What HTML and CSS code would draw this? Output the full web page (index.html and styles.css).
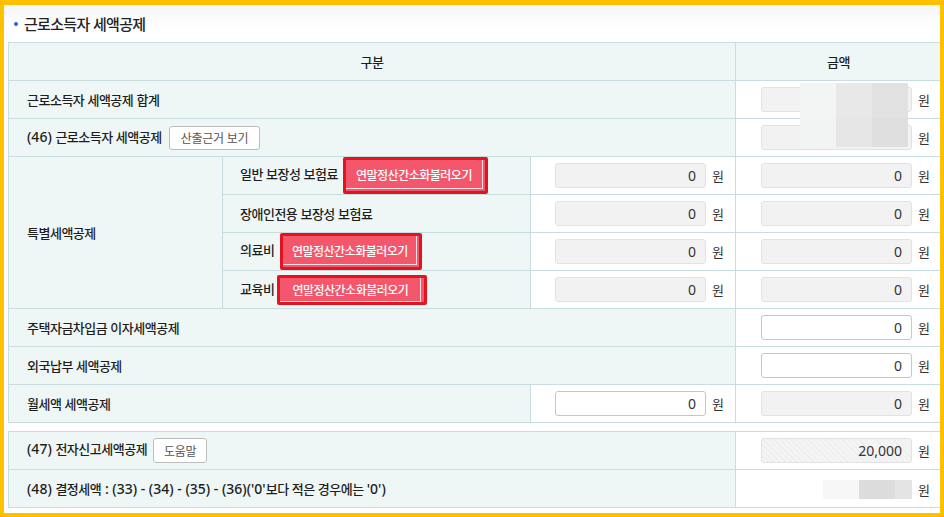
FILE: index.html
```html
<!DOCTYPE html>
<html lang="ko">
<head>
<meta charset="utf-8">
<title>근로소득자 세액공제</title>
<link rel="stylesheet" href="styles.css">
</head>
<body>
<div class="panel">
  <h2 class="title"><span class="dot"></span>근로소득자 세액공제</h2>
  <table class="grid">
    <colgroup><col class="c1"><col class="c2"><col class="c3"><col class="c4"></colgroup>
    <tr class="head">
      <th colspan="3">구분</th>
      <th>금액</th>
    </tr>
    <tr>
      <td class="lbl" colspan="3">근로소득자 세액공제 합계</td>
      <td class="val">
        <span class="inwrap">
          <input class="num dis" type="text" value="" disabled>
          <span class="mosaic m1"><i class="a"></i><i class="b"></i><i class="c"></i><i class="d"></i><i class="e"></i><i class="f"></i></span>
        </span><span class="won">원</span>
      </td>
    </tr>
    <tr>
      <td class="lbl" colspan="3"><span class="lat">(46) </span>근로소득자 세액공제<button class="btn gray">산출근거 보기</button></td>
      <td class="val"><input class="num dis" type="text" value="" disabled><span class="won">원</span></td>
    </tr>
    <tr>
      <td class="lbl" rowspan="4">특별세액공제</td>
      <td class="lbl sub">일반 보장성 보험료<span class="hl hl-a"><span class="pink">연말정산간소화불러오기</span></span></td>
      <td class="val"><input class="num dis" type="text" value="0" disabled><span class="won">원</span></td>
      <td class="val"><input class="num dis" type="text" value="0" disabled><span class="won">원</span></td>
    </tr>
    <tr>
      <td class="lbl sub">장애인전용 보장성 보험료</td>
      <td class="val"><input class="num dis" type="text" value="0" disabled><span class="won">원</span></td>
      <td class="val"><input class="num dis" type="text" value="0" disabled><span class="won">원</span></td>
    </tr>
    <tr>
      <td class="lbl sub">의료비<span class="hl hl-b"><span class="pink">연말정산간소화불러오기</span></span></td>
      <td class="val"><input class="num dis" type="text" value="0" disabled><span class="won">원</span></td>
      <td class="val"><input class="num dis" type="text" value="0" disabled><span class="won">원</span></td>
    </tr>
    <tr>
      <td class="lbl sub">교육비<span class="hl hl-c"><span class="pink">연말정산간소화불러오기</span></span></td>
      <td class="val"><input class="num dis" type="text" value="0" disabled><span class="won">원</span></td>
      <td class="val"><input class="num dis" type="text" value="0" disabled><span class="won">원</span></td>
    </tr>
    <tr>
      <td class="lbl" colspan="3">주택자금차입금 이자세액공제</td>
      <td class="val"><input class="num" type="text" value="0"><span class="won">원</span></td>
    </tr>
    <tr>
      <td class="lbl" colspan="3">외국납부 세액공제</td>
      <td class="val"><input class="num" type="text" value="0"><span class="won">원</span></td>
    </tr>
    <tr>
      <td class="lbl" colspan="2">월세액 세액공제</td>
      <td class="val"><input class="num" type="text" value="0"><span class="won">원</span></td>
      <td class="val"><input class="num dis" type="text" value="0" disabled><span class="won">원</span></td>
    </tr>
  </table>

  <table class="grid second">
    <colgroup><col class="c1"><col class="c2"><col class="c3"><col class="c4"></colgroup>
    <tr>
      <td class="lbl" colspan="3"><span class="lat">(47) </span>전자신고세액공제<button class="btn gray help">도움말</button></td>
      <td class="val"><input class="num dis hatch" type="text" value="20,000" disabled><span class="won">원</span></td>
    </tr>
    <tr>
      <td class="lbl" colspan="3"><span class="lat">(48) </span>결정세액<span class="lat"> : (33) - (34) - (35) - (36)('0'</span>보다 적은 경우에는 <span class="lat">'0')</span></td>
      <td class="val"><span class="mosaic2"><i class="a"></i><i class="b"></i><i class="c"></i></span><span class="won">원</span></td>
    </tr>
  </table>
</div>
</body>
</html>
```

FILE: styles.css
```css
* { box-sizing: border-box; }
html, body { margin: 0; padding: 0; }
body {
  background: #ffc000;
  width: 944px;
  height: 517px;
  overflow: hidden;
  font-family: "Noto Sans", "Noto Sans CJK KR", sans-serif;
  color: #333;
}
.panel {
  margin: 5px 4px 4px 4px;
  width: 936px;
  height: 508px;
  background: linear-gradient(#f6f6f6 0, #ffffff 24px);
  overflow: hidden;
}
.title {
  margin: 0;
  height: 37px;
  display: flex;
  align-items: center;
  padding-left: 10px;
  font-size: 15px;
  font-weight: 500;
  letter-spacing: -0.7px;
  color: #222;
  font-family: "Noto Sans CJK KR", sans-serif;
}
.dot {
  width: 4px;
  height: 4px;
  border-radius: 50%;
  background: #2f5fd6;
  margin-right: 6px;
}
.grid {
  margin-left: 4px;
  width: 933px;
  border-collapse: collapse;
  table-layout: fixed;
  font-family: "Noto Sans CJK KR", sans-serif;
  font-size: 13px;
  letter-spacing: -0.5px;
}
.lat {
  font-family: "Noto Sans", "Noto Sans CJK KR", sans-serif;
  font-size: 14px;
  letter-spacing: 0;
}
.c1 { width: 214px; }
.c2 { width: 308px; }
.c3 { width: 205px; }
.c4 { width: 206px; }
.grid th, .grid td {
  border: 1px solid #c8dde0;
  height: 38px;
  padding: 0;
}
.grid th {
  background: #eef7f6;
  font-weight: 500;
  color: #1e1e1e;
  text-align: center;
}
.lbl {
  background: #eef7f6;
  padding-left: 18px !important;
  font-weight: 500;
  color: #1e1e1e;
  white-space: nowrap;
}
.lbl.sub { padding-left: 17px !important; }
.val {
  background: #fff;
  text-align: right;
  padding-right: 11px !important;
  white-space: nowrap;
}
.second { margin-top: 8px; }
.num {
  width: 151px;
  height: 25px;
  border: 1px solid #c6c6c6;
  border-radius: 3px;
  background: #fff;
  text-align: right;
  padding: 0 9px 0 4px;
  font-family: "Noto Sans", sans-serif;
  font-size: 14px;
  color: #333;
  vertical-align: middle;
  letter-spacing: 0;
}
.num.dis {
  background: #f2f2f2;
  border-color: #e2e2e2;
  color: #333;
  -webkit-text-fill-color: #333;
  opacity: 1;
}
.num.hatch {
  background: repeating-linear-gradient(45deg, #ededed 0 1px, #f4f4f4 1px 4px);
}
.won {
  display: inline-block;
  margin-left: 6px;
  vertical-align: middle;
  font-family: "Noto Sans CJK KR", sans-serif;
  font-size: 13px;
  color: #333;
  letter-spacing: 0;
  font-weight: 400;
}
.inwrap {
  position: relative;
  display: inline-block;
  vertical-align: middle;
}
.inwrap .num { vertical-align: top; }
.mosaic {
  position: absolute;
  left: 39px;
  top: -4px;
  width: 108px;
  height: 64px;
  display: grid;
  grid-template-columns: 36px 36px 36px;
  grid-template-rows: 35px 29px;
  z-index: 2;
}
.mosaic i { display: block; }
.mosaic .a { background: #f3f4f4; }
.mosaic .b { background: #e8e8e8; }
.mosaic .c { background: #e2e2e2; }
.mosaic .d { background: #f2f3f3; }
.mosaic .e { background: #e6e6e6; }
.mosaic .f { background: #dfdfdf; }
.mosaic2 {
  display: inline-flex;
  vertical-align: middle;
  height: 19px;
}
.mosaic2 i { display: block; height: 19px; }
.mosaic2 .a { width: 36px; background: #f7f7f7; }
.mosaic2 .b { width: 36px; background: #dcdcdc; }
.mosaic2 .c { width: 17px; background: #e4e4e4; }
.btn {
  font-family: "Noto Sans CJK KR", sans-serif;
  cursor: pointer;
}
.btn.gray {
  margin-left: 7px;
  height: 24px;
  padding: 0 11px;
  background: #fff;
  border: 1px solid #bdbdbd;
  border-radius: 3px;
  font-size: 12px;
  color: #555;
  letter-spacing: -0.3px;
  vertical-align: middle;
}
.btn.help { margin-left: 6px; height: 25px; padding: 0 10px; }
.hl {
  display: inline-flex;
  vertical-align: middle;
  border: 3px solid #e3141f;
  border-radius: 2px;
  padding: 0 2px 2px 0;
  background: #f4566b;
}
.pink {
  display: flex;
  align-items: center;
  justify-content: center;
  background: #f4566b;
  color: #fff;
  font-family: "Noto Sans CJK KR", sans-serif;
  font-size: 12px;
  letter-spacing: -0.5px;
  font-weight: 500;
  border-right: 1px solid #fde3e7;
  border-bottom: 1px solid #fde3e7;
}
.hl-a { margin-left: 5px; width: 145px; height: 37px; }
.hl-b { margin-left: 6px; width: 142px; height: 37px; }
.hl-c { margin-left: 3px; width: 150px; height: 30px; padding: 0 3px 0 0; }
.hl .pink { width: 100%; height: 100%; }
```
